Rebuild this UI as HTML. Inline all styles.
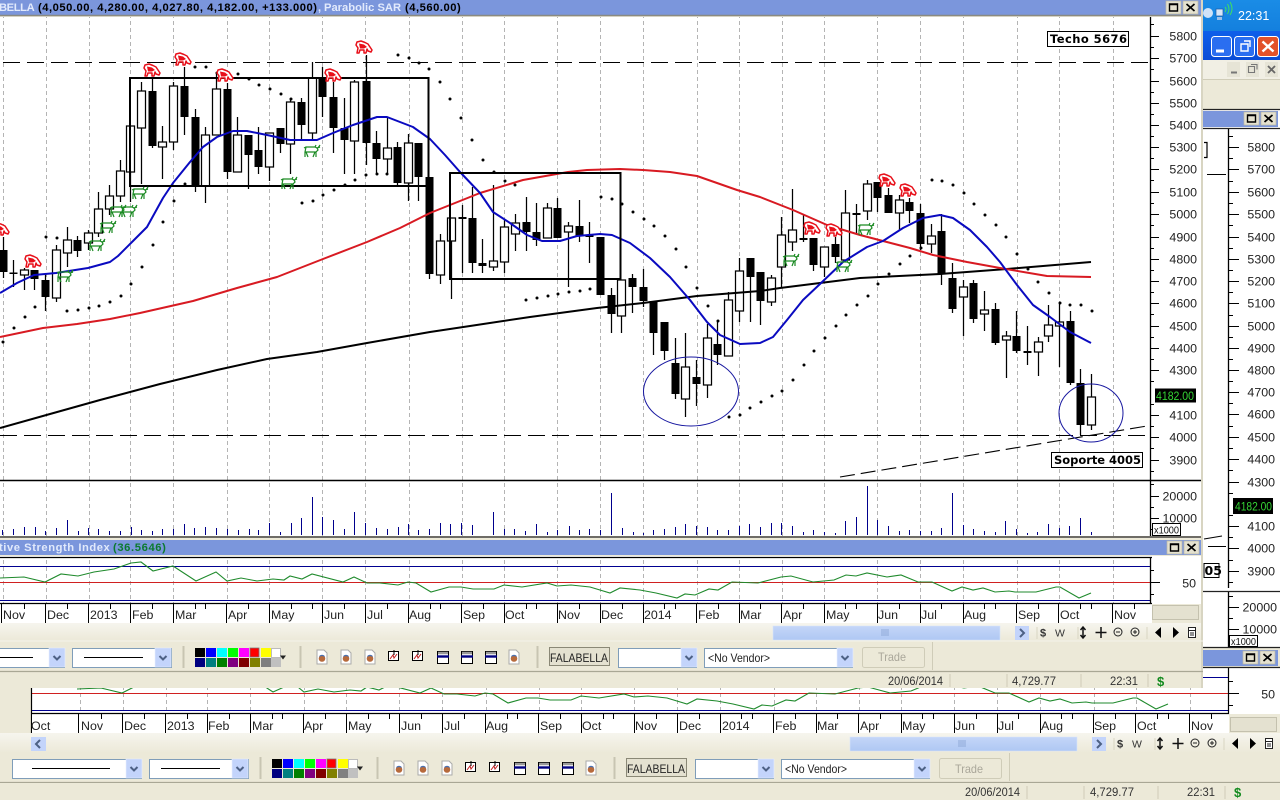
<!DOCTYPE html>
<html>
<head>
<meta charset="utf-8">
<title>Chart</title>
<style>
html,body{margin:0;padding:0;width:1280px;height:800px;overflow:hidden;background:#ece9d8}
svg{display:block;position:absolute;left:0;top:0;font-family:"Liberation Sans",sans-serif}
.ax{font-size:12.4px;fill:#222}
.axe{font-size:12.4px;fill:#222;text-anchor:end}
.tb{font-size:11.2px;font-weight:bold;fill:#000;letter-spacing:.52px}
.tl{font-size:11.2px;font-weight:bold;fill:#e2eafc}
.st{font-size:12.2px;fill:#333}
.wk{stroke:#000;stroke-width:1.25;fill:none}
</style>
</head>
<body>
<svg width="1280" height="800" viewBox="0 0 1280 800" xmlns="http://www.w3.org/2000/svg">
<defs>
<clipPath id="cMain"><rect x="0" y="17" width="1150" height="463"/></clipPath>
<clipPath id="cVol"><rect x="0" y="481" width="1150" height="55"/></clipPath>
<clipPath id="cRsi"><rect x="0" y="558" width="1150" height="45"/></clipPath>
<clipPath id="cBack"><rect x="31" y="668" width="1197" height="45"/></clipPath>
<linearGradient id="xp" x1="0" y1="0" x2="0" y2="1"><stop offset="0" stop-color="#0f5fea"/><stop offset="1" stop-color="#0a4cd6"/></linearGradient>
<linearGradient id="tray" x1="0" y1="0" x2="0" y2="1"><stop offset="0" stop-color="#1a8ce6"/><stop offset="1" stop-color="#1480de"/></linearGradient>
<linearGradient id="row" x1="0" y1="0" x2="0" y2="1"><stop offset="0" stop-color="#f6f5ee"/><stop offset="1" stop-color="#ece9d8"/></linearGradient>
<linearGradient id="thumb" x1="0" y1="0" x2="0" y2="1"><stop offset="0" stop-color="#c4d6f8"/><stop offset="1" stop-color="#afc8f3"/></linearGradient>
<g id="bear"><path d="M-7 -5L-3 -6L1 -4.500L4 -3L6 0L8 3L7 5L4 4L3 2L2 6L0 6L0 3L-4 3L-5 6L-7 6L-6 1L-8 -2Z" fill="#fff" stroke="#e8101a" stroke-width="1.500" stroke-linejoin="round"/><path d="M-5 -3.500L0 -2.500L3 0L0 1.500L-4 1.500Z" fill="#e8101a"/></g>
<g id="bull"><path d="M-8 -3L-6 -4L3 -4L5 -3L6 -1L4 1L4 6M3 1L1 6M-6 -4L-7 1L-7 6M-6 1L-4 6M-7 1L4 1M3 -4L4 -6M6 -3L8 -6M5 -3L8 -4" fill="none" stroke="#1a8a22" stroke-width="1.200"/></g>
<g id="doc"><path d="M0 0h7l3 3v11H0z" fill="#fff" stroke="#aaa"/><circle cx="5" cy="8.500" r="3.300" fill="#b76a3c"/><path d="M2.500 6.500a3.400 3.400 0 0 1 5 0" stroke="#4a70b0" stroke-width="1.200" fill="none"/></g>
<g id="cht"><path d="M.5 2.500h10v9h-10z" fill="#fff" stroke="#000"/><path d="M2 10L5 6L6 9L9 5" stroke="#c02020" fill="none"/><path d="M6 1v5" stroke="#000"/></g>
<g id="win"><path d="M.5 .5h11v12h-11z" fill="#fff" stroke="#000"/><path d="M0 5.500h12" stroke="#000080" stroke-width="2.400"/><path d="M1 2h10" stroke="#999" stroke-width="2.500"/></g>
<g id="arr"><path d="M0 0h16v19H0z" fill="#c3d4fb" stroke="#e6eeff" stroke-width=".6"/><path d="M4.500 8l3.500 3.500L11.500 8" fill="none" stroke="#4d6185" stroke-width="2"/></g>
<path id="rsi" fill="none" stroke="#1f8a2c" stroke-width="1.100" d="M0 578L24 577L45 582L61 574L78 576L94 572L114 569L131 563L141 562L153 571L173 566L196 581L216 572L227 581L241 578L257 581L273 579L284 580L290 576L302 579L312 574L343 582L354 577L367 583L380 583L398 585L408 582L416 583L431 592L449 587L461 587L473 589L494 589L504 585L522 587L547 583L557 586L571 585L590 587L610 593L620 588L640 590L656 593L677 598L685 594L695 595L709 589L718 590L732 582L758 583L781 577L791 576L813 582L834 580L846 575L856 576L867 573L887 577L901 575L918 582L932 582L952 591L962 587L973 590L983 588L995 592L1009 591L1015 592L1036 592L1056 587L1060 587L1079 598L1091 593"/>
<path id="grid" fill="none" stroke="#b4b4b4" stroke-width="1" stroke-dasharray="4 3" d="M3.500 0V800M46.500 0V800M89.500 0V800M130.500 0V800M173.500 0V800M227.500 0V800M269.500 0V800M322.500 0V800M365.500 0V800M409.500 0V800M462.500 0V800M504.500 0V800M557.500 0V800M600.500 0V800M643.500 0V800M697.500 0V800M739.500 0V800M782.500 0V800M824.500 0V800M877.500 0V800M920.500 0V800M963.500 0V800M1017.500 0V800M1059.500 0V800M1113.500 0V800"/>
<path id="xticks" fill="none" stroke="#000" d="M1.500 0V20M45.500 0V20M88.500 0V20M130.500 0V20M173.500 0V20M226.500 0V20M269.500 0V20M322.500 0V20M365.500 0V20M408.500 0V20M461.500 0V20M504.500 0V20M557.500 0V20M600.500 0V20M643.500 0V20M696.500 0V20M739.500 0V20M781.500 0V20M824.500 0V20M877.500 0V20M920.500 0V20M963.500 0V20M1016.500 0V20M1058.500 0V20M1112.500 0V20M24.500 0V5M67.500 0V5M110.500 0V5M152.500 0V5M195.500 0V5M205.500 0V5M248.500 0V5M291.500 0V5M312.500 0V5M344.500 0V5M387.500 0V5M430.500 0V5M440.500 0V5M483.500 0V5M526.500 0V5M536.500 0V5M579.500 0V5M622.500 0V5M664.500 0V5M675.500 0V5M718.500 0V5M760.500 0V5M803.500 0V5M845.500 0V5M856.500 0V5M899.500 0V5M941.500 0V5M984.500 0V5M995.500 0V5M1038.500 0V5M1080.500 0V5M1091.500 0V5M1134.500 0V5"/>
<g id="toolg">
<path d="M-64.500 648.500h129v19h-129z" fill="#fff" stroke="#7f9db9"/><use href="#arr" x="49" y="648"/><path d="M-45 657.500h78" stroke="#000"/>
<path d="M72.500 648.500h99v19h-99z" fill="#fff" stroke="#7f9db9"/><use href="#arr" x="155" y="648"/><path d="M84 657.500h59" stroke="#000"/>
<path d="M183.500 646V668M300.500 646V668M537.500 646V668" stroke="#c8c5b2" stroke-width="2"/>
<path d="M195 648h10v9h-10z" fill="#000"/><path d="M206 648h10v9h-10z" fill="#0000ff"/><path d="M217 648h10v9h-10z" fill="#00ffff"/><path d="M228 648h10v9h-10z" fill="#00ff00"/><path d="M239 648h10v9h-10z" fill="#ff00ff"/><path d="M250 648h9v9h-9z" fill="#ff0000" stroke="#777" stroke-width=".8"/><path d="M261 648h10v9h-10z" fill="#ffff00"/><path d="M271.500 648.500h9v9h-9z" fill="#fff" stroke="#bbb"/>
<path d="M195 658h10v9h-10z" fill="#000080"/><path d="M206 658h10v9h-10z" fill="#008080"/><path d="M217 658h10v9h-10z" fill="#008000"/><path d="M228 658h10v9h-10z" fill="#800080"/><path d="M239 658h10v9h-10z" fill="#800000"/><path d="M250 658h10v9h-10z" fill="#808000"/><path d="M261 658h10v9h-10z" fill="#808080"/><path d="M271 658h10v9h-10z" fill="#c0c0c0"/>
<path d="M280 655.500h6l-3 4z" fill="#222"/>
<use href="#doc" x="317" y="650"/><use href="#doc" x="341" y="650"/><use href="#doc" x="365" y="650"/>
<use href="#cht" x="388" y="649"/><use href="#cht" x="412" y="649"/>
<use href="#win" x="437" y="651"/><use href="#win" x="461" y="651"/><use href="#win" x="485" y="651"/>
<use href="#doc" x="509" y="650"/>
<path d="M549.500 647.500h60v18h-60z" fill="#e4e1d0" stroke="#8a8876"/>
<path d="M618.500 648.500h78v19h-78z" fill="#fff" stroke="#7f9db9"/><use href="#arr" x="681" y="648"/>
<path d="M704.500 648.500h148v19h-148z" fill="#fff" stroke="#7f9db9"/><use href="#arr" x="837" y="648"/>
<path d="M864.500 647.500h58a2 2 0 0 1 2 2v16a2 2 0 0 1-2 2h-58a2 2 0 0 1-2-2v-16a2 2 0 0 1 2-2z" fill="#ece9d8" stroke="#cfccb8"/>
<path d="M932.500 642V670" stroke="#cfccb8"/>
</g>
<g id="scrollg">
<path d="M773 626h227v14H773z" fill="url(#thumb)" stroke="#d8e4fb" stroke-width=".6"/>
<path d="M882 629v7M884 629v7M886 629v7M888 629v7" stroke="#8fa9d8"/>
<path d="M1015 626h14v14h-14z" fill="#c3d4fb"/><path d="M1020 629l4 4-4 4" fill="none" stroke="#4d6185" stroke-width="2"/>
<path d="M1083 627v11M1080.500 630l2.500-3 2.500 3M1080.500 635l2.500 3 2.500-3" stroke="#111" stroke-width="1.500" fill="none"/>
<path d="M1101 627v11M1095.500 632.500h11" stroke="#111" stroke-width="1.500"/>
<circle cx="1118" cy="632" r="4" fill="none" stroke="#222"/><path d="M1116 632h4" stroke="#222"/>
<circle cx="1135" cy="632" r="4" fill="none" stroke="#222"/><path d="M1133 632h4M1135 630v4" stroke="#222"/>
<path d="M1161 627v11l-6-5.500zM1173 627v11l6-5.500z" fill="#000"/>
<path d="M1188.500 627.500h7v10h-7zM1188.500 630.500h7M1190 633h4M1190 635h4" fill="#fff" stroke="#222"/>
</g>
<g id="statg">
<path d="M0 671.500H1203" stroke="#a9a795" stroke-width="1.200"/>
<path d="M950 674V687M1007 674V687M1081 674V687M1148 674V687" stroke="#cfccb8"/>
</g>
<g id="btn">
<path d="M0 0h15v13H0z" fill="#e4e1cf" stroke="#bbb8a4" stroke-width=".7"/><path d="M3.500 3h8v7h-8zM3.500 3.500h8" fill="none" stroke="#000" stroke-width="1.400"/>
<path d="M17 0h15v13H17z" fill="#e4e1cf" stroke="#bbb8a4" stroke-width=".7"/><path d="M20.500 3l8 7M28.500 3l-8 7" stroke="#000" stroke-width="1.700"/>
</g>
</defs>

<!-- base -->
<rect width="1280" height="800" fill="#ece9d8"/>

<!-- ===== right / back windows ===== -->
<rect x="1203" y="0" width="77" height="31" fill="url(#tray)"/>
<circle cx="1208" cy="13" r="5" fill="#cfe3f8"/>
<path d="M1216 9h7v7h-7z" fill="#d8e6f8" stroke="#1a5ea8" stroke-width=".7"/><path d="M1217 17h5v3h-5z" fill="#9dc0e8"/>
<path d="M1225 12q2-3 0-5M1227.500 14q3-5 0-10M1230 15q4-6 0-13" fill="none" stroke="#40e060" stroke-width="1"/>
<text x="1238" y="20" font-size="12.500" fill="#fff">22:31</text>
<rect x="1203" y="31" width="77" height="29" fill="url(#xp)"/>
<rect x="1211.500" y="36.500" width="20" height="20" rx="3" fill="#2a6ef0" stroke="#fff"/><path d="M1216 51h8" stroke="#fff" stroke-width="3"/>
<rect x="1234.500" y="36.500" width="20" height="20" rx="3" fill="#2a6ef0" stroke="#fff"/><path d="M1241 44h7v7h-7zM1244 41h6v6" fill="none" stroke="#fff" stroke-width="1.400"/>
<rect x="1257.500" y="36.500" width="21" height="20" rx="3" fill="#e2512a" stroke="#fff"/><path d="M1262.500 41.500l11 10M1273.500 41.500l-11 10" stroke="#fff" stroke-width="2.400"/>
<rect x="1203" y="60" width="77" height="49" fill="#ece9d8"/>
<rect x="1203" y="60" width="77" height="20" fill="#f1efe4"/>
<path d="M1203 79.500H1280" stroke="#d0cdb9"/>
<rect x="1227" y="62" width="13" height="15" fill="#e6e4d6"/><path d="M1231 72.500h6" stroke="#777" stroke-width="2"/>
<rect x="1246" y="62" width="13" height="15" fill="#e6e4d6"/><path d="M1248.500 66.500h6v6h-6zM1251 64.500h6v5" fill="none" stroke="#777" stroke-width="1.100"/>
<rect x="1265" y="62" width="13" height="15" fill="#e6e4d6"/><path d="M1268 66l7 7M1275 66l-7 7" stroke="#666" stroke-width="1.800"/>
<!-- back chart main -->
<rect x="1203" y="110" width="77" height="481" fill="#fff"/>
<path d="M1203 109.500H1280" stroke="#222" stroke-width="1.300"/>
<rect x="1203" y="111" width="75" height="16" fill="#7b96dc"/>
<use href="#btn" x="1244" y="112"/>
<path d="M1203 128.500H1280" stroke="#222" stroke-width="1.200"/>
<path d="M1204 142.500h3v15h-3" fill="none" stroke="#000" stroke-width="1.200"/>
<path d="M1207 174.500H1226M1208 546.500H1226" stroke="#000"/>
<path d="M1204 539L1222 536" stroke="#000"/>
<path d="M1228.500 129V588" stroke="#000" stroke-width="1.300"/>
<path stroke="#000" fill="none" d="M1228 147.500h11M1228 169.500h11M1228 192.500h11M1228 214.500h11M1228 237.500h11M1228 259.500h11M1228 281.500h11M1228 303.500h11M1228 326.500h11M1228 348.500h11M1228 370.500h11M1228 392.500h11M1228 414.500h11M1228 437.500h11M1228 459.500h11M1228 482.500h11M1228 526.500h11M1228 548.500h11M1228 571.500h11M1228 136.500h5M1228 158.500h5M1228 181.500h5M1228 203.500h5M1228 225.500h5M1228 248.500h5M1228 270.500h5M1228 292.500h5M1228 315.500h5M1228 337.500h5M1228 359.500h5M1228 381.500h5M1228 403.500h5M1228 426.500h5M1228 448.500h5M1228 470.500h5M1228 493.500h5M1228 515.500h5M1228 537.500h5M1228 560.500h5M1228 582.500h5"/>
<g class="axe">
<text x="1275" y="151.500">5800</text><text x="1275" y="173.500">5700</text><text x="1275" y="196.500">5600</text><text x="1275" y="218.500">5500</text><text x="1275" y="241.500">5400</text><text x="1275" y="263.500">5300</text><text x="1275" y="285.500">5200</text><text x="1275" y="307.500">5100</text><text x="1275" y="330.500">5000</text><text x="1275" y="352.500">4900</text><text x="1275" y="374.500">4800</text><text x="1275" y="396.500">4700</text><text x="1275" y="418.500">4600</text><text x="1275" y="441.500">4500</text><text x="1275" y="463.500">4400</text><text x="1275" y="486.500">4300</text><text x="1275" y="530.500">4100</text><text x="1275" y="552.500">4000</text><text x="1275" y="575.500">3900</text>
</g>
<rect x="1233" y="498" width="40" height="16" fill="#000"/><text x="1235" y="510.500" font-size="12" fill="#35d535" textLength="37" lengthAdjust="spacingAndGlyphs">4182.00</text>
<rect x="1204" y="563.500" width="15" height="14" fill="#fff" stroke="#000"/><text x="1204.500" y="575" font-size="12.500" font-weight="bold" font-family="'DejaVu Sans',sans-serif" fill="#000">05</text>
<!-- back volume -->
<rect x="1203" y="591" width="77" height="57" fill="#fff"/>
<path d="M1203 591.500H1280" stroke="#222" stroke-width="1.300"/>
<path d="M1228.500 592V647" stroke="#000" stroke-width="1.300"/>
<path stroke="#000" d="M1228 607.500h11M1228 629.500h11M1228 596.500h5M1228 618.500h5"/>
<text class="axe" x="1277" y="611.500">20000</text><text class="axe" x="1277" y="633.500">10000</text>
<rect x="1229.500" y="635.500" width="28" height="11" fill="#fff" stroke="#000"/><text x="1231" y="645" font-size="10.500" fill="#111" textLength="25" lengthAdjust="spacingAndGlyphs">x1000</text>
<path d="M1203 647.500H1280" stroke="#222" stroke-width="1.200"/>
<rect x="1203" y="650" width="75" height="16" fill="#7b96dc"/>
<use href="#btn" x="1243" y="651"/>
<!-- back RSI -->
<rect x="31" y="667" width="1197" height="47" fill="#fff"/>
<rect x="1203" y="667" width="77" height="47" fill="#fff"/>
<path d="M1203 667.500H1280" stroke="#222" stroke-width="1.200"/>
<g clip-path="url(#cBack)"><use href="#grid" x="77"/></g>
<path d="M31 677.500H1228" stroke="#000090" stroke-width="1.100"/>
<path d="M31 693.500H1228" stroke="#d02020" stroke-width="1.100"/>
<path d="M31 710.500H1228" stroke="#000090" stroke-width="1.100"/>
<use href="#rsi" x="77" y="111"/>
<path d="M31.500 688V733M1228.500 668V714" stroke="#000" stroke-width="1.200"/>
<path stroke="#000" d="M1228 693.500h11M1228 681.500h5M1228 705.500h5"/>
<text class="axe" x="1275" y="698.500">50</text>
<!-- back xaxis -->
<rect x="32" y="714" width="1197" height="19" fill="#fff"/>
<path d="M31 713.500H1229" stroke="#000" stroke-width="1.200"/>
<use href="#xticks" x="77" y="714"/>
<g class="ax">
<text x="31" y="730">Oct</text><text x="81" y="730">Nov</text><text x="124" y="730">Dec</text><text x="167" y="730">2013</text><text x="208" y="730">Feb</text><text x="252" y="730">Mar</text><text x="304" y="730">Apr</text><text x="348" y="730">May</text><text x="401" y="730">Jun</text><text x="444" y="730">Jul</text><text x="486" y="730">Aug</text><text x="540" y="730">Sep</text><text x="582" y="730">Oct</text><text x="635" y="730">Nov</text><text x="679" y="730">Dec</text><text x="722" y="730">2014</text><text x="775" y="730">Feb</text><text x="817" y="730">Mar</text><text x="860" y="730">Apr</text><text x="902" y="730">May</text><text x="955" y="730">Jun</text><text x="998" y="730">Jul</text><text x="1041" y="730">Aug</text><text x="1094" y="730">Sep</text><text x="1137" y="730">Oct</text><text x="1191" y="730">Nov</text>
</g>
<rect x="1230.500" y="717.500" width="46" height="14" fill="#e4e1d0" stroke="#c4c1ae"/>
<!-- back rows -->
<rect x="0" y="733" width="1280" height="20" fill="url(#row)"/>
<rect x="31" y="737" width="15" height="14" fill="#c3d4fb"/><path d="M40 740l-4 4 4 4" fill="none" stroke="#4d6185" stroke-width="2"/>
<use href="#scrollg" x="77" y="111"/>
<path d="M0 782.500H1280" stroke="#a9a795" stroke-width="1.200"/>
<use href="#toolg" x="77" y="111"/>
<text x="627" y="773" font-size="12.200" fill="#222" textLength="58" lengthAdjust="spacingAndGlyphs">FALABELLA</text>
<text x="785" y="773" font-size="11.800" fill="#222" textLength="62" lengthAdjust="spacingAndGlyphs">&lt;No Vendor&gt;</text>
<text x="955" y="773" font-size="12" fill="#aaa79a" textLength="28" lengthAdjust="spacingAndGlyphs">Trade</text>
<rect x="0" y="783" width="1280" height="17" fill="#ece9d8"/>
<path d="M1027 786V799M1084 786V799M1158 786V799M1225 786V799" stroke="#cfccb8"/>
<text class="st" x="965" y="796" textLength="55" lengthAdjust="spacingAndGlyphs">20/06/2014</text><text class="st" x="1090" y="796" textLength="44" lengthAdjust="spacingAndGlyphs">4,729.77</text><text class="st" x="1187" y="796" textLength="28" lengthAdjust="spacingAndGlyphs">22:31</text>
<text x="1234" y="797" font-size="13" font-weight="bold" fill="#128a1e">$</text>

<!-- ===== front window ===== -->
<rect x="0" y="0" width="1203" height="688" fill="#ece9d8"/>
<rect x="1201" y="0" width="2" height="688" fill="#d8d5c2"/>
<rect x="0" y="0" width="1201" height="15" fill="#7b96dc"/>
<path d="M0 15.500H1201" stroke="#8a8a82" stroke-width="1.500"/>
<text class="tl" x="-1" y="11" style="letter-spacing:-.4px">BELLA</text>
<text class="tb" x="38" y="11">(4,050.00, 4,280.00, 4,027.80, 4,182.00, +133.000)</text>
<text class="tl" x="318" y="11">,</text>
<text class="tl" x="324" y="11">Parabolic SAR</text>
<text class="tb" x="405" y="11">(4,560.00)</text>
<use href="#btn" x="1166" y="1"/>

<!-- main plot -->
<rect x="0" y="17" width="1201" height="463" fill="#fff"/>
<g clip-path="url(#cMain)"><use href="#grid"/></g>
<path d="M3 62.500H1150M0 435.500H1150" stroke="#000" stroke-width="1.100" stroke-dasharray="17 7"/>
<path d="M840 477L1147 426" stroke="#000" stroke-width="1.100" stroke-dasharray="15 6"/>

<!-- wicks -->
<path class="wk" transform="translate(.5 0)" d="M3 237V278M13 260V287M24 268V290M34 270V290M45 273V311M56 245V302M67 227V267M77 236V257M88 230V250M98 192V237M109 185V215M120 160V202M130 126V202M141 82V184M152 77V148M162 126V179M173 82V150M184 67V135M195 109V192M205 127V203M216 72V135M227 83V179M237 117V172M248 135V189M258 127V174M269 133V181M280 128V153M290 98V174M301 98V140M312 62V140M322 67V117M333 82V153M344 98V174M354 80V174M366 55V165M376 131V175M387 118V175M397 142V185M408 134V201M418 143V201M429 177V279M440 234V284M451 218V299M462 205V273M472 187V273M482 239V273M493 185V271M504 220V273M515 214V251M526 197V251M536 203V246M547 203V238M557 198V238M568 222V287M579 200V242M589 222V263M600 237V295M611 288V333M621 280V333M632 274V313M643 269V307M653 301V355M664 322V360M675 338V399M685 333V417M696 360V406M707 324V398M717 320V365M728 292V356M739 258V322M750 258V322M760 272V325M771 275V306M781 217V288M792 189V251M803 215V242M813 238V271M824 247V277M835 237V263M845 190V260M856 204V233M867 180V220M877 182V212M888 188V213M899 195V230M909 198V223M920 204V250M931 224V253M941 214V285M952 263V313M963 280V336M973 280V323M984 291V331M995 303V345M1006 331V378M1016 311V353M1027 326V365M1038 337V376M1048 305V342M1059 303V367M1070 311V385M1080 369V435M1091 374V430"/>
<!-- black bodies -->
<path fill="none" stroke="#000" stroke-width="8" transform="translate(.5 0)" d="M3 250V272M34 270V279M45 280V297M77 240V251M152 91V146M184 86V117M195 117V186M227 89V172M248 135V155M258 150V167M280 128V144M301 102V125M322 77V97M333 97V128M344 128V140M366 81V143M376 143V159M397 147V183M418 143V177M429 177V274M472 218V263M482 263V266M526 222V232M536 232V240M557 208V238M579 226V236M600 237V295M611 295V314M632 278V287M643 287V301M653 301V333M664 322V351M675 363V394M696 377V384M717 344V355M750 258V277M760 272V301M813 238V265M835 244V257M877 182V198M888 195V213M909 202V211M920 213V244M941 231V274M952 278V309M973 283V319M995 309V343M1016 336V351M1070 321V383M1080 383V425M13 272.500V274M462 217V219M589 235.500V237M803 238V240M856 213V215M1027 351V353"/>
<!-- white bodies -->
<path fill="#fff" stroke="#000" stroke-width="1.250" d="M20.500 270h8v5h-8zM52.500 250h8v48h-8zM63.500 240h8v13h-8zM84.500 233h8v10h-8zM94.500 209h8v24h-8zM105.500 196h8v13h-8zM116.500 171h8v25h-8zM126.500 126h8v46h-8zM137.500 91h8v37h-8zM158.500 142h8v5h-8zM169.500 86h8v56h-8zM201.500 135h8v51h-8zM212.500 89h8v46h-8zM233.500 135h8v37h-8zM265.500 133h8v34h-8zM286.500 102h8v42h-8zM308.500 78h8v55h-8zM350.500 82h8v59h-8zM383.500 148h8v11h-8zM404.500 143h8v40h-8zM436.500 241h8v34h-8zM447.500 218h8v23h-8zM489.500 261h8v6h-8zM500.500 227h8v35h-8zM511.500 223h8v11h-8zM543.500 208h8v30h-8zM564.500 226h8v6h-8zM617.500 280h8v36h-8zM681.500 367h8v32h-8zM703.500 338h8v47h-8zM724.500 300h8v56h-8zM735.500 271h8v40h-8zM767.500 278h8v24h-8zM777.500 235h8v32h-8zM788.500 230h8v12h-8zM820.500 247h8v20h-8zM841.500 213h8v47h-8zM863.500 184h8v27h-8zM895.500 200h8v13h-8zM927.500 236h8v8h-8zM959.500 287h8v10h-8zM980.500 310h8v4h-8zM1002.500 336h8v4h-8zM1034.500 342h8v10h-8zM1044.500 325h8v11h-8zM1055.500 322h8v4h-8zM1087.500 397h8v28h-8z"/>

<!-- moving averages -->
<path fill="none" stroke="#000" stroke-width="2" stroke-linejoin="round" d="M0 428L50 414L100 400L160 384L217 370L267 359L317 352L367 343L430 332L470 326L530 317L597 308L643 303L697 296L760 291L780 288L860 278L940 274L1007 269L1091 262"/>
<path fill="none" stroke="#d81a22" stroke-width="2" stroke-linejoin="round" d="M0 337L43 328L77 324L110 319L140 313L193 301L237 288L277 277L323 259L367 242L400 228L430 213L450 205L480 193L523 180L568 172L587 170L620 169L643 170L670 172L697 176L737 190L760 197L793 210L827 225L860 235L883 241L910 248L933 255L967 262L1000 268L1047 276L1091 277"/>
<path fill="none" stroke="#0a0ac0" stroke-width="2" stroke-linejoin="round" d="M0 293L17 283L34 275L56 273L88 268L110 262L118 256L133 241L147 227L163 198L173 183L190 162L203 147L217 137L233 131L247 131L267 135L290 140L317 140L333 133L353 125L377 117L387 117L413 127L430 139L445 155L460 172L480 193L493 212L510 223L527 235L542 241L560 241L577 236L600 234L612 235L630 243L650 258L670 277L690 300L707 322L720 335L740 344L760 343L773 337L787 320L803 300L820 284L843 262L867 247L883 241L903 228L923 218L940 215L953 218L970 230L987 247L1000 262L1017 285L1033 305L1050 317L1070 332L1091 343"/>

<!-- SAR -->
<path fill="none" stroke="#000" stroke-width="3" stroke-linecap="round" d="M3 342h0M14 328h0M25 317h0M35 307h0M46 237h0M57 238h0M67 311h0M78 310h0M89 308h0M99 306h0M110 302h0M121 296h0M131 284h0M142 267h0M153 245h0M163 222h0M174 201h0M185 184h0M195 67h0M206 67h0M217 73h0M227 74h0M238 74h0M249 79h0M259 85h0M270 89h0M281 94h0M291 99h0M302 203h0M313 201h0M323 195h0M334 190h0M345 185h0M355 180h0M366 175h0M377 174h0M387 174h0M398 55h0M409 58h0M419 63h0M429 69h0M440 82h0M450 99h0M461 118h0M472 140h0M483 160h0M494 172h0M505 181h0M515 185h0M526 300h0M537 298h0M548 296h0M558 294h0M569 292h0M580 291h0M590 289h0M601 197h0M612 199h0M622 204h0M633 212h0M644 219h0M654 226h0M665 236h0M676 249h0M686 267h0M697 288h0M708 306h0M718 321h0M729 417h0M740 415h0M750 408h0M761 402h0M772 396h0M782 391h0M793 380h0M804 365h0M814 351h0M825 338h0M836 326h0M846 315h0M857 305h0M868 296h0M878 284h0M889 274h0M900 264h0M910 256h0M921 248h0M932 180h0M942 181h0M953 185h0M964 193h0M974 204h0M985 215h0M996 225h0M1006 237h0M1017 254h0M1028 269h0M1038 282h0M1049 293h0M1060 303h0M1070 305h0M1081 305h0M1092 311h0"/>

<!-- rects + ellipses -->
<path d="M130 78H428.500V186H130Z" fill="none" stroke="#000" stroke-width="2"/>
<path d="M450 173H620.500V279H450Z" fill="none" stroke="#000" stroke-width="2"/>
<ellipse cx="691" cy="391.500" rx="47.500" ry="34.500" fill="none" stroke="#1818a0" stroke-width="1"/>
<ellipse cx="1091" cy="413" rx="32" ry="29" fill="none" stroke="#1818a0" stroke-width="1"/>

<!-- bears/bulls -->
<use href="#bear" x="152" y="70"/><use href="#bear" x="183" y="59"/><use href="#bear" x="225" y="75"/><use href="#bear" x="333" y="75"/><use href="#bear" x="364" y="47"/><use href="#bear" x="1" y="229"/><use href="#bear" x="33" y="261"/><use href="#bear" x="812" y="228"/><use href="#bear" x="834" y="230"/><use href="#bear" x="887" y="180"/><use href="#bear" x="908" y="190"/>
<use href="#bull" x="140" y="193"/><use href="#bull" x="118" y="211"/><use href="#bull" x="129" y="211"/><use href="#bull" x="108" y="227"/><use href="#bull" x="312" y="151"/><use href="#bull" x="289" y="183"/><use href="#bull" x="97" y="245"/><use href="#bull" x="65" y="276"/><use href="#bull" x="791" y="260"/><use href="#bull" x="844" y="266"/><use href="#bull" x="866" y="229"/>

<!-- axis -->
<path d="M1150.500 17V480" stroke="#000" stroke-width="1.300"/>
<path stroke="#000" fill="none" d="M1150 36.500h9M1150 58.500h9M1150 81.500h9M1150 103.500h9M1150 125.500h9M1150 147.500h9M1150 169.500h9M1150 192.500h9M1150 214.500h9M1150 237.500h9M1150 259.500h9M1150 281.500h9M1150 303.500h9M1150 326.500h9M1150 348.500h9M1150 370.500h9M1150 415.500h9M1150 437.500h9M1150 460.500h9M1150 24.500h4M1150 47.500h4M1150 69.500h4M1150 92.500h4M1150 114.500h4M1150 136.500h4M1150 158.500h4M1150 180.500h4M1150 203.500h4M1150 225.500h4M1150 248.500h4M1150 270.500h4M1150 292.500h4M1150 314.500h4M1150 337.500h4M1150 359.500h4M1150 381.500h4M1150 404.500h4M1150 426.500h4M1150 448.500h4M1150 471.500h4"/>
<g class="axe">
<text x="1197" y="40.500">5800</text><text x="1197" y="62.500">5700</text><text x="1197" y="85.500">5600</text><text x="1197" y="107.500">5500</text><text x="1197" y="129.500">5400</text><text x="1197" y="151.500">5300</text><text x="1197" y="173.500">5200</text><text x="1197" y="196.500">5100</text><text x="1197" y="218.500">5000</text><text x="1197" y="241.500">4900</text><text x="1197" y="263.500">4800</text><text x="1197" y="285.500">4700</text><text x="1197" y="307.500">4600</text><text x="1197" y="330.500">4500</text><text x="1197" y="352.500">4400</text><text x="1197" y="374.500">4300</text><text x="1197" y="419.500">4100</text><text x="1197" y="441.500">4000</text><text x="1197" y="464.500">3900</text>
</g>
<rect x="1155" y="388.500" width="41" height="14" fill="#000"/><text x="1156" y="400" font-size="12" fill="#35d535" textLength="38" lengthAdjust="spacingAndGlyphs">4182.00</text>

<!-- annotation labels -->
<rect x="1047.500" y="31.500" width="81" height="15" fill="#fff" stroke="#000"/>
<text x="1050" y="43" font-family="'DejaVu Sans',sans-serif" font-size="11.500" font-weight="bold" fill="#000" textLength="77">Techo 5676</text>
<rect x="1051.500" y="452.500" width="91" height="15" fill="#fff" stroke="#000"/>
<text x="1054" y="464" font-family="'DejaVu Sans',sans-serif" font-size="11.500" font-weight="bold" fill="#000" textLength="87">Soporte 4005</text>

<!-- volume -->
<rect x="0" y="481" width="1201" height="55" fill="#fff"/>
<path d="M0 480.500H1201" stroke="#000" stroke-width="1.400"/>
<g clip-path="url(#cVol)"><use href="#grid"/></g>
<path fill="none" stroke="#00008c" stroke-width="1" transform="translate(.5 0)" d="M2 530V535M13 529V535M24 527V535M35 527V535M45 531V535M56 528V535M67 520V535M78 531V535M88 528V535M98 529V535M109 531V535M120 531V535M131 527V535M141 530V535M152 531V535M162 529V535M173 529V535M184 524V535M194 528V535M205 527V535M216 528V535M227 529V535M238 530V535M249 529V535M258 530V535M269 523V535M280 532V535M291 523V535M301 518V535M312 497V535M322 517V535M333 520V535M344 529V535M354 512V535M365 523V535M376 528V535M387 529V535M398 527V535M408 524V535M418 530V535M429 529V535M440 523V535M450 524V535M461 523V535M472 525V535M493 512V535M504 529V535M514 529V535M525 531V535M536 524V535M547 532V535M557 530V535M569 526V535M579 530V535M589 529V535M600 530V535M611 493V535M622 528V535M633 532V535M643 533V535M653 530V535M664 529V535M675 527V535M685 524V535M696 526V535M707 527V535M717 530V535M728 530V535M739 526V535M749 524V535M760 527V535M771 523V535M781 523V535M792 526V535M803 532V535M813 530V535M824 532V535M835 533V535M845 521V535M856 517V535M867 486V535M877 520V535M888 526V535M899 531V535M909 530V535M920 531V535M931 531V535M941 528V535M952 493V535M963 525V535M973 529V535M984 531V535M995 532V535M1005 521V535M1016 529V535M1027 533V535M1037 532V535M1048 524V535M1059 528V535M1069 526V535M1080 518V535M1091 532V535"/>
<path d="M1150.500 481V536" stroke="#000" stroke-width="1.300"/>
<path stroke="#000" d="M1150 496.500h9M1150 518.500h9M1150 484.500h4M1150 507.500h4M1150 529.500h4"/>
<text class="axe" x="1197" y="500.500">20000</text><text class="axe" x="1197" y="522.500">10000</text>
<rect x="1152.500" y="523.500" width="28" height="12" fill="#fff" stroke="#000"/><text x="1154" y="533.500" font-size="10.500" fill="#111" textLength="25" lengthAdjust="spacingAndGlyphs">x1000</text>
<path d="M0 537H1201" stroke="#222" stroke-width="1.300"/>

<!-- RSI title -->
<rect x="0" y="540" width="1201" height="15" fill="#7b96dc"/>
<text class="tl" x="-1" y="551" style="letter-spacing:.56px">tive Strength Index</text>
<text class="tb" x="113" y="551" style="fill:#0b7a2e;letter-spacing:.62px">(36.5646)</text>
<use href="#btn" x="1167" y="541"/>
<!-- RSI plot -->
<rect x="0" y="556" width="1152" height="48" fill="#fff"/>
<path d="M0 557.500H1152" stroke="#000" stroke-width="1.200"/>
<g clip-path="url(#cRsi)"><use href="#grid"/></g>
<path d="M0 566.500H1150" stroke="#000090" stroke-width="1.100"/>
<path d="M0 582.500H1150" stroke="#d02020" stroke-width="1.100"/>
<path d="M0 600.500H1150" stroke="#000090" stroke-width="1.100"/>
<use href="#rsi"/>
<path d="M1150.500 557V603" stroke="#000" stroke-width="1.300"/>
<rect x="1152" y="556" width="49" height="48" fill="#fff"/>
<path stroke="#000" d="M1150 582.500h10M1150 570.500h4M1150 594.500h4"/>
<text class="axe" x="1196" y="587.500">50</text>
<!-- x axis -->
<rect x="0" y="604" width="1152" height="19" fill="#fff"/>
<path d="M0 603.500H1152" stroke="#000" stroke-width="1.200"/>
<use href="#xticks" y="604"/>
<g class="ax">
<text x="3" y="619">Nov</text><text x="47" y="619">Dec</text><text x="90" y="619">2013</text><text x="132" y="619">Feb</text><text x="175" y="619">Mar</text><text x="228" y="619">Apr</text><text x="271" y="619">May</text><text x="324" y="619">Jun</text><text x="367" y="619">Jul</text><text x="409" y="619">Aug</text><text x="463" y="619">Sep</text><text x="505" y="619">Oct</text><text x="558" y="619">Nov</text><text x="601" y="619">Dec</text><text x="644" y="619">2014</text><text x="698" y="619">Feb</text><text x="740" y="619">Mar</text><text x="783" y="619">Apr</text><text x="826" y="619">May</text><text x="878" y="619">Jun</text><text x="921" y="619">Jul</text><text x="964" y="619">Aug</text><text x="1018" y="619">Sep</text><text x="1060" y="619">Oct</text><text x="1114" y="619">Nov</text>
</g>
<rect x="1152" y="604" width="49" height="20" fill="#ece9d8"/>
<rect x="1152.500" y="605.500" width="46" height="14" fill="#e4e1d0" stroke="#c4c1ae"/>
<!-- scroll row -->
<rect x="0" y="623" width="1201" height="18" fill="url(#row)"/>
<use href="#scrollg"/>
<path d="M1037 627V639M1078 627V639M1147 627V639" stroke="#d8d5c2"/>
<path d="M1114 738V750M1155 738V750M1224 738V750" stroke="#d8d5c2"/>
<text x="1040" y="636.500" font-size="11" font-weight="bold" fill="#333">$</text><text x="1055" y="636.500" font-size="10.500" fill="#333">W</text>
<text x="1117" y="747.500" font-size="11" font-weight="bold" fill="#333">$</text><text x="1132" y="747.500" font-size="10.500" fill="#333">W</text>
<!-- toolbar -->
<rect x="0" y="641" width="1201" height="30" fill="#ece9d8"/>
<path d="M0 641H1203" stroke="#f4f3ea"/>
<use href="#toolg"/>
<text x="550" y="662" font-size="12.200" fill="#222" textLength="58" lengthAdjust="spacingAndGlyphs">FALABELLA</text>
<text x="708" y="662" font-size="11.800" fill="#222" textLength="62" lengthAdjust="spacingAndGlyphs">&lt;No Vendor&gt;</text>
<text x="878" y="661" font-size="12" fill="#aaa79a" textLength="28" lengthAdjust="spacingAndGlyphs">Trade</text>
<!-- status -->
<use href="#statg"/>
<text class="st" x="888" y="685" textLength="55" lengthAdjust="spacingAndGlyphs">20/06/2014</text><text class="st" x="1012" y="685" textLength="44" lengthAdjust="spacingAndGlyphs">4,729.77</text><text class="st" x="1110" y="685" textLength="28" lengthAdjust="spacingAndGlyphs">22:31</text>
<text x="1157" y="686" font-size="13" font-weight="bold" fill="#128a1e">$</text>
</svg>
</body>
</html>
